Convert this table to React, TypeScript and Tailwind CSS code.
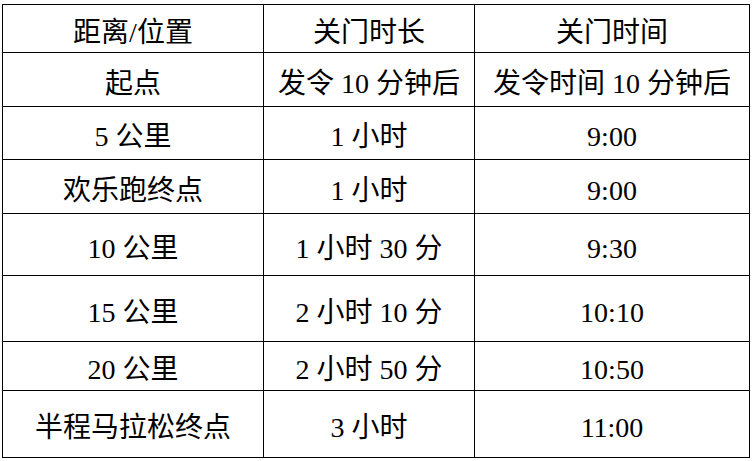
const rows: [string, string, string][] = [
  ["距离/位置", "关门时长", "关门时间"],
  ["起点", "发令 10 分钟后", "发令时间 10 分钟后"],
  ["5 公里", "1 小时", "9:00"],
  ["欢乐跑终点", "1 小时", "9:00"],
  ["10 公里", "1 小时 30 分", "9:30"],
  ["15 公里", "2 小时 10 分", "10:10"],
  ["20 公里", "2 小时 50 分", "10:50"],
  ["半程马拉松终点", "3 小时", "11:00"],
];

export default function App() {
  return (
    <div className="w-[752px] h-[461px] bg-white pl-[2px] pt-[4px]">
      <div
        className="grid w-max grid-cols-[260px_210px_274px] grid-rows-[47px_53px_52px_53px_61px_65px_48px_66px] gap-px bg-black p-px text-[28px] text-black"
        style={{ fontFamily: '"Liberation Serif", "Noto Sans CJK SC", serif' }}
      >
        {rows.flatMap((row, i) =>
          row.map((cell, j) => (
            <div
              key={`${i}-${j}`}
              className="flex items-center justify-center bg-white pt-[8px] leading-none whitespace-pre"
            >
              {cell}
            </div>
          ))
        )}
      </div>
    </div>
  );
}
